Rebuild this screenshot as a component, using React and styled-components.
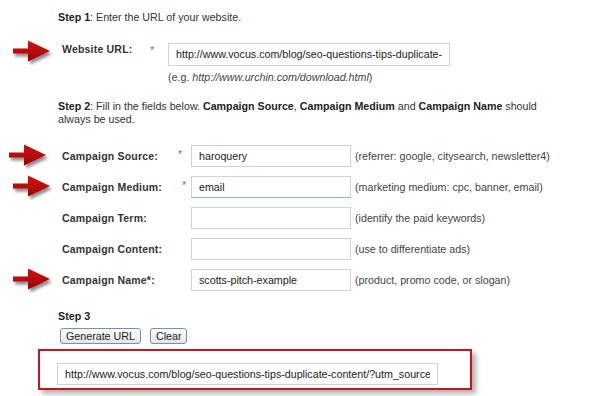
import React from "react";
import styled, { createGlobalStyle } from "styled-components";

const GlobalStyle = createGlobalStyle`
  html, body {
    margin: 0;
    padding: 0;
    background: #ffffff;
  }
  body {
    font-family: "Liberation Sans", Arial, sans-serif;
    color: #333;
  }
`;

const Page = styled.div`
  width: 600px;
  height: 396px;
  overflow: hidden;
  padding-top: 11px;
  box-sizing: border-box;
`;

const StepText = styled.p`
  margin: ${({ mt }) => mt || 0}px 0 0 58px;
  font-size: 10.7px;
  line-height: 13.5px;
  color: #333;
  white-space: nowrap;
`;

const StepTitle = styled.b`
  font-weight: bold;
  color: #222;
`;

const UrlGrid = styled.div`
  display: grid;
  grid-template-columns: 62px 86px 20px 282px;
  margin-top: 18px;
`;

const FieldGrid = styled.div`
  display: grid;
  grid-template-columns: 62px 116px 13px 160px auto;
  grid-auto-rows: 22px;
  row-gap: 9px;
  align-items: center;
  margin-top: 18px;
`;

const ArrowCell = styled.div`
  display: flex;
  align-items: center;
  height: 22px;
  padding-left: ${({ shift }) => shift ?? 12}px;
  align-self: ${({ top }) => (top ? "start" : "center")};
  margin-top: ${({ top }) => (top ? "-2px" : "0")};

  svg {
    display: block;
    margin: -2px 0;
  }
`;

const Label = styled.div`
  font-size: 10.5px;
  font-weight: bold;
  letter-spacing: 0.2px;
  color: #333;
  line-height: 14px;
  align-self: ${({ top }) => (top ? "start" : "center")};
  margin-top: ${({ top }) => (top ? "-1px" : "0")};
`;

const Star = styled.div`
  font-size: 11px;
  color: #777;
  line-height: 14px;
  align-self: ${({ top }) => (top ? "start" : "center")};
  margin-top: ${({ top }) => (top ? "0" : "-4px")};
  padding-left: ${({ pad }) => pad || 0}px;
`;

const TextInput = styled.input`
  box-sizing: border-box;
  width: ${({ w }) => w}px;
  height: ${({ h }) => h || 22}px;
  margin: 0;
  padding: 0 7px;
  border: 1px solid #d2d2d2;
  border-bottom-color: ${({ $focused }) => ($focused ? "#8bb0e6" : "#d2d2d2")};
  font-family: "Liberation Sans", Arial, sans-serif;
  font-size: 10.7px;
  color: #222;
  background: #fff;
  outline: none;
`;

const Hint = styled.div`
  font-size: 10.7px;
  color: #444;
  line-height: 14px;
  padding-left: 4px;
  white-space: nowrap;
`;

const UrlHint = styled(Hint)`
  grid-column: 4;
  padding-left: 0;
  margin-top: 4px;
  i {
    font-style: italic;
  }
`;

const Step3 = styled(StepText)`
  font-weight: bold;
  color: #222;
`;

const ButtonRow = styled.div`
  display: flex;
  gap: 9px;
  margin: 5px 0 0 60px;
`;

const Button = styled.button`
  height: 16px;
  padding: 0 5px;
  border: 1px solid #7292b4;
  border-radius: 3px;
  background: linear-gradient(#ffffff, #e4e4e4);
  font-family: "Liberation Sans", Arial, sans-serif;
  font-size: 10.7px;
  line-height: 13px;
  color: #222;
  cursor: pointer;
`;

const ResultBox = styled.div`
  box-sizing: border-box;
  width: 434px;
  height: 41px;
  margin: 5px 0 0 38px;
  padding: 12px 0 0 17px;
  border: 2px solid #c4161c;
  box-shadow: 4px 4px 5px rgba(0, 0, 0, 0.3);
`;

function Arrow() {
  return (
    <svg width="42" height="26" viewBox="0 0 42 26">
      <defs>
        <linearGradient id="arrowFill" x1="0" y1="0" x2="0" y2="1">
          <stop offset="0" stopColor="#d41414" />
          <stop offset="1" stopColor="#9a0000" />
        </linearGradient>
        <filter id="arrowShadow" x="-20%" y="-30%" width="150%" height="180%">
          <feDropShadow dx="2" dy="3" stdDeviation="1.4" floodColor="#000" floodOpacity="0.45" />
        </filter>
      </defs>
      <path
        d="M1 9.5 H16 V1.5 L38 12 L16 22.5 V14.5 H1 Z"
        fill="url(#arrowFill)"
        filter="url(#arrowShadow)"
      />
    </svg>
  );
}

const fields = [
  { label: "Campaign Source:", star: true, value: "haroquery", hint: "(referrer: google, citysearch, newsletter4)", arrow: 8 },
  { label: "Campaign Medium:", star: true, starPad: 4, value: "email", focused: true, hint: "(marketing medium: cpc, banner, email)", arrow: 12 },
  { label: "Campaign Term:", value: "", hint: "(identify the paid keywords)" },
  { label: "Campaign Content:", value: "", hint: "(use to differentiate ads)" },
  { label: "Campaign Name*:", value: "scotts-pitch-example", hint: "(product, promo code, or slogan)", arrow: 12 },
];

export default function App() {
  return (
    <Page>
      <GlobalStyle />
      <StepText>
        <StepTitle>Step 1</StepTitle>: Enter the URL of your website.
      </StepText>

      <UrlGrid>
        <ArrowCell top>
          <Arrow />
        </ArrowCell>
        <Label top>Website URL:</Label>
        <Star top pad={2}>*</Star>
        <TextInput
          w={282}
          h={23}
          readOnly
          value="http://www.vocus.com/blog/seo-questions-tips-duplicate-content/"
        />
        <UrlHint>
          (e.g. <i>http://www.urchin.com/download.html</i>)
        </UrlHint>
      </UrlGrid>

      <StepText mt={16}>
        <StepTitle>Step 2</StepTitle>: Fill in the fields below. <StepTitle>Campaign Source</StepTitle>,{" "}
        <StepTitle>Campaign Medium</StepTitle> and <StepTitle>Campaign Name</StepTitle> should
        <br />
        always be used.
      </StepText>

      <FieldGrid>
        {fields.map((f) => (
          <React.Fragment key={f.label}>
            <ArrowCell shift={f.arrow}>{f.arrow !== undefined && <Arrow />}</ArrowCell>
            <Label>{f.label}</Label>
            <Star pad={f.starPad}>{f.star ? "*" : ""}</Star>
            <TextInput w={160} readOnly value={f.value} $focused={f.focused} />
            <Hint>{f.hint}</Hint>
          </React.Fragment>
        ))}
      </FieldGrid>

      <Step3 mt={19}>Step 3</Step3>
      <ButtonRow>
        <Button>Generate URL</Button>
        <Button>Clear</Button>
      </ButtonRow>

      <ResultBox>
        <TextInput
          w={381}
          readOnly
          value="http://www.vocus.com/blog/seo-questions-tips-duplicate-content/?utm_source=haroquery"
        />
      </ResultBox>
    </Page>
  );
}
